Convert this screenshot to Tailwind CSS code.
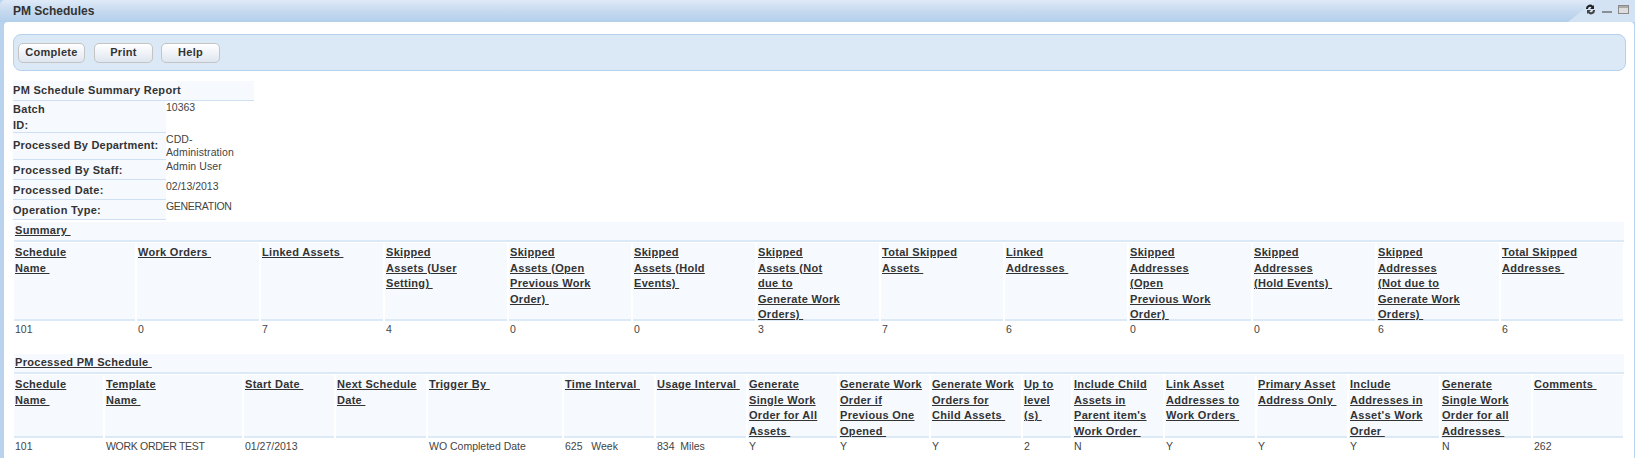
<!DOCTYPE html>
<html lang="en">
<head>
    <meta charset="UTF-8">
    <title>PM Schedules</title>
    <script src="https://cdn.jsdelivr.net/npm/@tailwindcss/browser@4"></script>
</head>
<body class="bg-white font-['Liberation_Sans',Arial,sans-serif] text-[#333] overflow-hidden">
    <div class="h-[458px] w-[1635px] bg-[#b9d3ee] pl-[4px] pr-[1px] relative overflow-hidden">
        <!-- Title bar -->
        <div class="absolute left-0 top-0 h-[22px] w-full bg-gradient-to-b from-[#dfeaf7] via-[#c6daef] to-[#b3cfeb] rounded-t-[5px]"></div>
        <div class="absolute right-0 top-0 h-[22px] w-[67px] bg-[#d3e3f4] [clip-path:polygon(27px_0,100%_0,100%_100%,0_100%)]"></div>
        <div class="relative h-[22px] flex items-center justify-between">
            <span class="text-[12px] font-bold text-[#333] pl-[9px]">PM Schedules</span>
            <div class="flex items-center gap-[6px] pr-[5px] -mt-[4px]">
                <svg width="11" height="11" viewBox="0 0 11 11"><path d="M1 5a4 4 0 0 1 7-3l1-1v4H5l1.500-1.500A2 2 0 0 0 3 5z" fill="#222"/><path d="M10 6a4 4 0 0 1-7 3l-1 1V6h4L4.500 7.500A2 2 0 0 0 8 6z" fill="#444"/></svg>
                <svg width="10" height="10" viewBox="0 0 10 10"><rect x="0" y="7" width="10" height="2" fill="#8a8f96"/></svg>
                <svg width="11" height="9" viewBox="0 0 11 9"><rect x="0.500" y="0.500" width="10" height="8" fill="#ddd" stroke="#8a8a8a"/><rect x="1" y="1" width="9" height="2" fill="#aaa"/></svg>
            </div>
        </div>

        <!-- Body -->
        <div class="bg-white h-[436px] pl-[9px] pr-[8px] rounded-t-[4px] pt-[12px] tracking-[0.3px]">
            <div class="h-[37px] bg-[#dbe8f6] border border-[#b5d0ee] rounded-[8px] flex items-center pl-[4px]">
                <button class="h-[20px] w-[67px] rounded-[5px] border border-[#c4c4c4] bg-gradient-to-b from-white to-[#dfe6f0] text-[11px] font-bold text-[#333]">Complete</button>
                <button class="ml-[9px] h-[20px] w-[59px] rounded-[5px] border border-[#c4c4c4] bg-gradient-to-b from-white to-[#dfe6f0] text-[11px] font-bold text-[#333]">Print</button>
                <button class="ml-[8px] h-[20px] w-[59px] rounded-[5px] border border-[#c4c4c4] bg-gradient-to-b from-white to-[#dfe6f0] text-[11px] font-bold text-[#333]">Help</button>
            </div>

            <!-- Summary report -->
            <div class="mt-[10px] w-[241px] text-[11px]">
                <div class="h-[20px] bg-[#f6faff] border-b border-[#cfe0f2] font-bold flex items-center">PM Schedule Summary Report</div>
                <div class="grid grid-cols-[153px_88px] leading-[15.500px]">
                    <div class="h-[32px] bg-[#f6faff] border-b border-[#cfe0f2] font-bold pt-[1px]"><span class="block w-[40px]">Batch ID:</span></div>
                    <div class="text-[10.500px] text-[#444] leading-[13px] tracking-normal">10363</div>
                    <div class="h-[27px] bg-[#f6faff] border-b border-[#cfe0f2] font-bold flex items-center tracking-[0.2px] whitespace-nowrap">Processed By Department:</div>
                    <div class="text-[10.500px] text-[#444] leading-[13px] tracking-[0.1px]">CDD-<br>Administration</div>
                    <div class="h-[20px] bg-[#f6faff] border-b border-[#cfe0f2] font-bold flex items-end pb-[1px]">Processed By Staff:</div>
                    <div class="text-[10.500px] text-[#444] leading-[13px] tracking-[0.1px]">Admin User</div>
                    <div class="h-[20px] bg-[#f6faff] border-b border-[#cfe0f2] font-bold flex items-end pb-[1px]">Processed Date:</div>
                    <div class="text-[10.500px] text-[#444] leading-[13px] tracking-normal">02/13/2013</div>
                    <div class="h-[20px] bg-[#f6faff] border-b border-[#cfe0f2] font-bold flex items-end pb-[1px]">Operation Type:</div>
                    <div class="text-[10.500px] text-[#444] leading-[13px] tracking-[-0.3px]">GENERATION</div>
                </div>
            </div>

            <!-- Summary table -->
            <div class="mt-[2px] ml-[1px] w-[1610px] text-[11px]">
                <div class="h-[20px] bg-[#f6faff] border-b-2 border-[#dce9f6] font-bold pl-[1px] pb-[2px] flex items-center"><span class="underline">Summary&nbsp;</span></div>
                <div class="grid grid-cols-[121px_repeat(12,122px)] gap-x-[2px] mt-[1px] font-bold leading-[15.500px]">
                    <div class="h-[78px] bg-[#f6faff] border-b-2 border-[#dce9f6] pt-[2px] pl-[1px]"><span class="underline">Schedule<br>Name&nbsp;</span></div>
                    <div class="h-[78px] bg-[#f6faff] border-b-2 border-[#dce9f6] pt-[2px] pl-[1px]"><span class="underline">Work Orders&nbsp;</span></div>
                    <div class="h-[78px] bg-[#f6faff] border-b-2 border-[#dce9f6] pt-[2px] pl-[1px]"><span class="underline">Linked Assets&nbsp;</span></div>
                    <div class="h-[78px] bg-[#f6faff] border-b-2 border-[#dce9f6] pt-[2px] pl-[1px]"><span class="underline">Skipped<br>Assets (User<br>Setting)&nbsp;</span></div>
                    <div class="h-[78px] bg-[#f6faff] border-b-2 border-[#dce9f6] pt-[2px] pl-[1px]"><span class="underline">Skipped<br>Assets (Open<br>Previous Work<br>Order)&nbsp;</span></div>
                    <div class="h-[78px] bg-[#f6faff] border-b-2 border-[#dce9f6] pt-[2px] pl-[1px]"><span class="underline">Skipped<br>Assets (Hold<br>Events)&nbsp;</span></div>
                    <div class="h-[78px] bg-[#f6faff] border-b-2 border-[#dce9f6] pt-[2px] pl-[1px]"><span class="underline">Skipped<br>Assets (Not<br>due to<br>Generate Work<br>Orders)&nbsp;</span></div>
                    <div class="h-[78px] bg-[#f6faff] border-b-2 border-[#dce9f6] pt-[2px] pl-[1px]"><span class="underline">Total Skipped<br>Assets&nbsp;</span></div>
                    <div class="h-[78px] bg-[#f6faff] border-b-2 border-[#dce9f6] pt-[2px] pl-[1px]"><span class="underline">Linked<br>Addresses&nbsp;</span></div>
                    <div class="h-[78px] bg-[#f6faff] border-b-2 border-[#dce9f6] pt-[2px] pl-[1px]"><span class="underline">Skipped<br>Addresses<br>(Open<br>Previous Work<br>Order)&nbsp;</span></div>
                    <div class="h-[78px] bg-[#f6faff] border-b-2 border-[#dce9f6] pt-[2px] pl-[1px]"><span class="underline">Skipped<br>Addresses<br>(Hold Events)&nbsp;</span></div>
                    <div class="h-[78px] bg-[#f6faff] border-b-2 border-[#dce9f6] pt-[2px] pl-[1px]"><span class="underline">Skipped<br>Addresses<br>(Not due to<br>Generate Work<br>Orders)&nbsp;</span></div>
                    <div class="h-[78px] bg-[#f6faff] border-b-2 border-[#dce9f6] pt-[2px] pl-[1px]"><span class="underline">Total Skipped<br>Addresses&nbsp;</span></div>
                </div>
                <div class="grid grid-cols-[121px_repeat(12,122px)] gap-x-[2px] h-[33px] text-[10.500px] text-[#444] tracking-normal pt-[1px] pl-[1px]">
                    <div>101</div><div>0</div><div>7</div><div>4</div><div>0</div><div>0</div><div>3</div><div>7</div><div>6</div><div>0</div><div>0</div><div>6</div><div>6</div>
                </div>
            </div>

            <!-- Processed table -->
            <div class="ml-[1px] w-[1610px] text-[11px]">
                <div class="h-[20px] bg-[#f6faff] border-b-2 border-[#dce9f6] font-bold pl-[1px] pb-[2px] flex items-center"><span class="underline">Processed PM Schedule&nbsp;</span></div>
                <div class="grid grid-cols-[89px_137px_90px_90px_134px_90px_90px_89px_90px_90px_48px_90px_90px_90px_90px_90px_90px] gap-x-[2px] mt-[1px] font-bold leading-[15.500px]">
                    <div class="h-[63px] bg-[#f6faff] border-b-2 border-[#dce9f6] pt-[2px] pl-[1px]"><span class="underline">Schedule<br>Name&nbsp;</span></div>
                    <div class="h-[63px] bg-[#f6faff] border-b-2 border-[#dce9f6] pt-[2px] pl-[1px]"><span class="underline">Template<br>Name&nbsp;</span></div>
                    <div class="h-[63px] bg-[#f6faff] border-b-2 border-[#dce9f6] pt-[2px] pl-[1px]"><span class="underline">Start Date&nbsp;</span></div>
                    <div class="h-[63px] bg-[#f6faff] border-b-2 border-[#dce9f6] pt-[2px] pl-[1px]"><span class="underline">Next Schedule<br>Date&nbsp;</span></div>
                    <div class="h-[63px] bg-[#f6faff] border-b-2 border-[#dce9f6] pt-[2px] pl-[1px]"><span class="underline">Trigger By&nbsp;</span></div>
                    <div class="h-[63px] bg-[#f6faff] border-b-2 border-[#dce9f6] pt-[2px] pl-[1px]"><span class="underline">Time Interval&nbsp;</span></div>
                    <div class="h-[63px] bg-[#f6faff] border-b-2 border-[#dce9f6] pt-[2px] pl-[1px]"><span class="underline">Usage Interval&nbsp;</span></div>
                    <div class="h-[63px] bg-[#f6faff] border-b-2 border-[#dce9f6] pt-[2px] pl-[1px]"><span class="underline">Generate<br>Single Work<br>Order for All<br>Assets&nbsp;</span></div>
                    <div class="h-[63px] bg-[#f6faff] border-b-2 border-[#dce9f6] pt-[2px] pl-[1px]"><span class="underline">Generate Work<br>Order if<br>Previous One<br>Opened&nbsp;</span></div>
                    <div class="h-[63px] bg-[#f6faff] border-b-2 border-[#dce9f6] pt-[2px] pl-[1px]"><span class="underline">Generate Work<br>Orders for<br>Child Assets&nbsp;</span></div>
                    <div class="h-[63px] bg-[#f6faff] border-b-2 border-[#dce9f6] pt-[2px] pl-[1px]"><span class="underline">Up to<br>level<br>(s)&nbsp;</span></div>
                    <div class="h-[63px] bg-[#f6faff] border-b-2 border-[#dce9f6] pt-[2px] pl-[1px]"><span class="underline">Include Child<br>Assets in<br>Parent item's<br>Work Order&nbsp;</span></div>
                    <div class="h-[63px] bg-[#f6faff] border-b-2 border-[#dce9f6] pt-[2px] pl-[1px]"><span class="underline">Link Asset<br>Addresses to<br>Work Orders&nbsp;</span></div>
                    <div class="h-[63px] bg-[#f6faff] border-b-2 border-[#dce9f6] pt-[2px] pl-[1px]"><span class="underline">Primary Asset<br>Address Only&nbsp;</span></div>
                    <div class="h-[63px] bg-[#f6faff] border-b-2 border-[#dce9f6] pt-[2px] pl-[1px]"><span class="underline">Include<br>Addresses in<br>Asset's Work<br>Order&nbsp;</span></div>
                    <div class="h-[63px] bg-[#f6faff] border-b-2 border-[#dce9f6] pt-[2px] pl-[1px]"><span class="underline">Generate<br>Single Work<br>Order for all<br>Addresses&nbsp;</span></div>
                    <div class="h-[63px] bg-[#f6faff] border-b-2 border-[#dce9f6] pt-[2px] pl-[1px]"><span class="underline">Comments&nbsp;</span></div>
                </div>
                <div class="grid grid-cols-[89px_137px_90px_90px_134px_90px_90px_89px_90px_90px_48px_90px_90px_90px_90px_90px_90px] gap-x-[2px] text-[10.500px] text-[#444] tracking-normal pt-[1px] pl-[1px]">
                    <div>101</div><div class="tracking-[-0.3px]">WORK ORDER TEST</div><div>01/27/2013</div><div></div><div>WO Completed Date</div><div>625&nbsp;&nbsp; Week</div><div>834&nbsp; Miles</div><div>Y</div><div>Y</div><div>Y</div><div>2</div><div>N</div><div>Y</div><div>Y</div><div>Y</div><div>N</div><div>262</div>
                </div>
            </div>
        </div>
    </div>
</body>
</html>
